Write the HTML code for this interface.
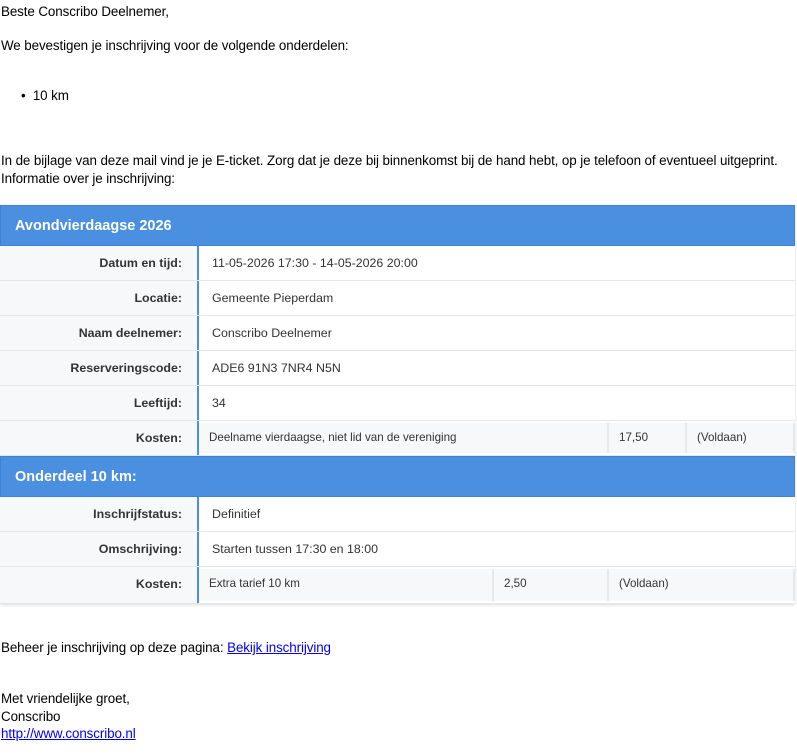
<!DOCTYPE html>
<html><head><meta charset="utf-8"><style>
body{margin:0;width:797px;height:756px;overflow:hidden;background:#fff;font-family:"Liberation Sans",Arial,sans-serif;color:#000}
.t{position:absolute;left:1px;font-size:13.4px;white-space:nowrap;letter-spacing:-0.1px}
a{color:#0000ee}
.tbl{position:absolute;left:0;top:205px;width:795px;box-shadow:0 1px 3px rgba(0,0,0,.15);font-size:12.4px;color:#333}
.h{background:#4a8fe0;color:#fff;font-weight:bold;font-size:14.5px;height:41px;line-height:41px;padding-left:14px;border:1px solid #3f82d3;box-sizing:border-box}
.r{display:flex;height:35px;border-bottom:1px solid #e4e6e8;box-sizing:border-box}
.l{width:199px;background:#f7f8fa;text-align:right;font-weight:bold;padding-right:15px;box-sizing:border-box;line-height:34px;border-right:2px solid #4a8fe0;color:#333}
.v{flex:1;line-height:34px;padding-left:13px;background:#fff}
.n{flex:1;display:flex;background:#fff;padding:2px 0 2px 0}
.n div{background:#f7f8fa;border-right:2px solid #e6e8ea;line-height:29px;padding-left:10px;box-sizing:border-box;font-size:11.6px}
</style></head><body>
<div class="t" style="top:4px">Beste Conscribo Deelnemer,</div>
<div class="t" style="top:38px">We bevestigen je inschrijving voor de volgende onderdelen:</div>
<div class="t" style="top:88px;left:21px">•&nbsp;&nbsp;10 km</div>
<div class="t" style="top:153px">In de bijlage van deze mail vind je je E-ticket. Zorg dat je deze bij binnenkomst bij de hand hebt, op je telefoon of eventueel uitgeprint.</div>
<div class="t" style="top:171px">Informatie over je inschrijving:</div>
<div class="tbl">
<div class="h">Avondvierdaagse 2026</div>
<div class="r"><div class="l">Datum en tijd:</div><div class="v">11-05-2026 17:30 - 14-05-2026 20:00</div></div>
<div class="r"><div class="l">Locatie:</div><div class="v">Gemeente Pieperdam</div></div>
<div class="r"><div class="l">Naam deelnemer:</div><div class="v">Conscribo Deelnemer</div></div>
<div class="r"><div class="l">Reserveringscode:</div><div class="v">ADE6 91N3 7NR4 N5N</div></div>
<div class="r"><div class="l">Leeftijd:</div><div class="v">34</div></div>
<div class="r"><div class="l">Kosten:</div><div class="n"><div style="width:410px">Deelname vierdaagse, niet lid van de vereniging</div><div style="width:78px">17,50</div><div style="flex:1">(Voldaan)</div></div></div>
<div class="h">Onderdeel 10 km:</div>
<div class="r"><div class="l">Inschrijfstatus:</div><div class="v">Definitief</div></div>
<div class="r"><div class="l">Omschrijving:</div><div class="v">Starten tussen 17:30 en 18:00</div></div>
<div class="r" style="height:37px"><div class="l">Kosten:</div><div class="n"><div style="width:295px">Extra tarief 10 km</div><div style="width:115px">2,50</div><div style="flex:1">(Voldaan)</div></div></div>
</div>
<div class="t" style="top:640px">Beheer je inschrijving op deze pagina: <a href="#">Bekijk inschrijving</a></div>
<div class="t" style="top:691px">Met vriendelijke groet,</div>
<div class="t" style="top:709px">Conscribo</div>
<div class="t" style="top:726px"><a href="#">http://www.conscribo.nl</a></div>
</body></html>
